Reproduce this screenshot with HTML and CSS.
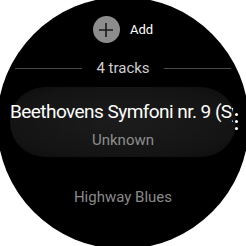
FILE: index.html
```html
<!DOCTYPE html>
<html>
<head>
<meta charset="utf-8">
<link rel="stylesheet" href="styles.css">
</head>
<body>
<div class="watch">
  <div class="add-row">
    <div class="add-btn">
      <svg width="16" height="16" viewBox="0 0 16 16"><path d="M8 1V15M1 8H15" stroke="#1a1a1a" stroke-width="1.6" fill="none"/></svg>
    </div>
    <span class="add-label">Add</span>
  </div>
  <div class="divider">
    <span class="line"></span>
    <span class="count">4 tracks</span>
    <span class="line"></span>
  </div>
  <div class="item active">
    <div class="title-clip"><div class="title">Beethovens Symfoni nr. 9 (Symfoni)</div></div>
    <div class="sub">Unknown</div>
  </div>
  <div class="item">
    <div class="next">Highway Blues</div>
  </div>
  <div class="dots"><i></i><i></i><i></i></div>
</div>
</body>
</html>
```
FILE: styles.css
```css
html, body { margin: 0; padding: 0; background: #fff; width: 246px; height: 246px; overflow: hidden; }
body { font-family: Roboto, "Noto Sans", sans-serif; }
.watch {
  position: relative;
  width: 252px; height: 252px;
  margin: -3px 0 0 -3px;
  border-radius: 50%;
  background: #000;
  overflow: hidden;
  display: flex; flex-direction: column; align-items: center;
}
.add-row { display: flex; align-items: center; gap: 10px; margin-top: 19px; height: 27px; }
.add-btn { width: 27px; height: 27px; border-radius: 50%; background: #8c8c8c; display: flex; align-items: center; justify-content: center; }
.add-label { color: #fff; font-size: 13px; }
.divider { display: flex; align-items: center; gap: 14px; width: 216px; margin-top: 16px; height: 18px; }
.line { flex: 1; height: 1px; background: #4a4a4a; }
.count { color: #cfcfcf; font-size: 15px; }
.item { width: 226px; box-sizing: border-box; display: flex; flex-direction: column; align-items: center; }
.item.active {
  margin-top: 10px; height: 70px; border-radius: 35px;
  background: radial-gradient(ellipse at center, #1c1c1c 0%, #141414 70%, #0c0c0c 100%);
  padding-top: 14px; align-items: stretch;
}
.title-clip { width: 223px; overflow: hidden; }
.title { color: #fff; font-size: 19px; line-height: 22px; white-space: nowrap; letter-spacing: -0.55px; }
.sub { color: #8e8e8e; font-size: 15px; line-height: 16px; align-self: center; margin-top: 9px; }
.next { color: #8a8a8a; font-size: 15px; margin-top: 31px; }
.dots { position: absolute; left: 238px; top: 116px; display: flex; flex-direction: column; gap: 4px; }
.dots i { width: 3px; height: 3px; border-radius: 50%; background: #fff; display: block; }
```
